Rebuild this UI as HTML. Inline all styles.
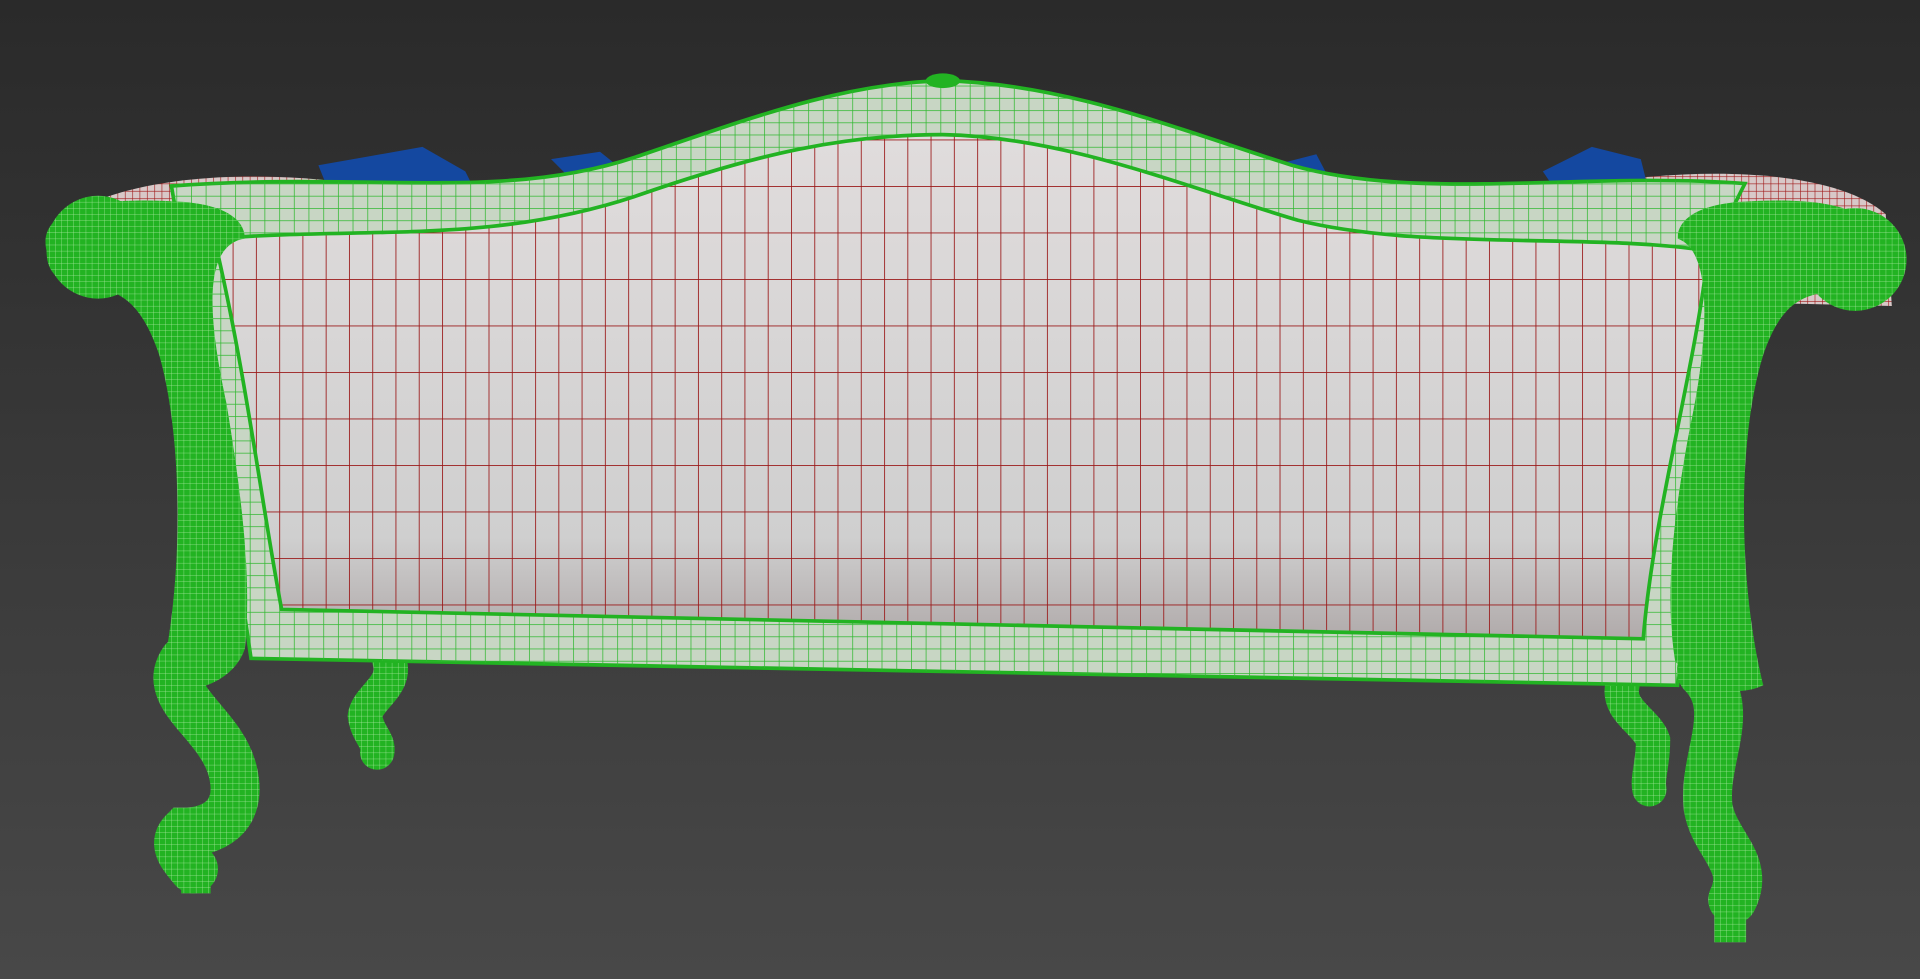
<!DOCTYPE html>
<html><head><meta charset="utf-8"><style>
html,body{margin:0;padding:0;width:1920px;height:979px;overflow:hidden;background:#383838}
svg{display:block}
</style></head><body>
<svg width="1920" height="979" viewBox="0 0 1568 800" preserveAspectRatio="none">
<defs>
<linearGradient id="bg" x1="0" y1="0" x2="0" y2="1">
<stop offset="0" stop-color="#2a2a2a"/><stop offset="1" stop-color="#484848"/></linearGradient>
<linearGradient id="pan" x1="0" y1="0" x2="0" y2="1">
<stop offset="0" stop-color="#e0dcdc"/><stop offset="0.8" stop-color="#cfcfcf"/><stop offset="1" stop-color="#b0aaaa"/></linearGradient>
<pattern id="rg" width="19" height="38" patternUnits="userSpaceOnUse">
<path d="M0,0V38M0,0H19" stroke="#9a1818" stroke-width="1.4" fill="none"/></pattern>
<pattern id="gg" width="12" height="10" patternUnits="userSpaceOnUse">
<path d="M0,0V10M0,0H12" stroke="#2fb82f" stroke-width="1.2" fill="none"/></pattern>
<pattern id="gd" width="5" height="5" patternUnits="userSpaceOnUse">
<rect width="5" height="5" fill="#22b322"/><path d="M0,0V5M0,0H5" stroke="#a8e8a0" stroke-width="0.6" fill="none"/></pattern>
<pattern id="rd" width="6" height="6" patternUnits="userSpaceOnUse">
<rect width="6" height="6" fill="#d8c8c8"/><path d="M0,0V6M0,0H6" stroke="#a01818" stroke-width="1" fill="none"/></pattern>
<clipPath id="pc"><path id="panel" d="M175,195 C300,185 400,200 520,160 C620,125 690,110 770,110 C870,112 960,150 1060,180 C1160,205 1300,190 1395,205 C1385,300 1350,420 1342,522 L230,498 C215,420 200,300 175,195 Z"/></clipPath>
</defs>
<rect width="1568" height="800" fill="url(#bg)"/>
<!-- red arm tops -->
<path d="M45,185 C80,150 180,135 290,150 L230,240 L80,240 Z" fill="url(#rd)"/>
<path d="M1300,150 C1400,135 1500,140 1540,175 L1545,250 L1330,245 Z" fill="url(#rd)"/>
<!-- blue cushions -->
<path d="M260,135 L300,128 L345,120 L380,140 L390,160 L270,160 Z" fill="#1448a0"/>
<path d="M450,130 L490,124 L510,140 L470,150 Z" fill="#1448a0"/>
<path d="M1040,135 L1075,126 L1085,145 Z" fill="#1448a0"/>
<path d="M1260,140 L1300,120 L1340,130 L1345,150 L1270,155 Z" fill="#1448a0"/>
<!-- back legs -->
<path d="M318,540 C325,560 300,570 298,585 C300,600 310,605 308,615" stroke="url(#gd)" stroke-width="28" fill="none" stroke-linecap="round"/>
<path d="M1325,560 C1320,580 1345,590 1350,605 C1350,625 1345,635 1347,645" stroke="url(#gd)" stroke-width="28" fill="none" stroke-linecap="round"/>
<!-- frame -->
<path d="M140,152 C300,140 410,165 520,128 C620,94 690,68 770,66 C870,68 960,105 1055,135 C1160,165 1290,140 1425,150 L1400,200 L1370,560 L205,538 L195,470 Z" fill="#c8d6c4" stroke="#22b322" stroke-width="3"/>
<path d="M140,152 C300,140 410,165 520,128 C620,94 690,68 770,66 C870,68 960,105 1055,135 C1160,165 1290,140 1425,150 L1400,200 L1370,560 L205,538 L195,470 Z" fill="url(#gg)"/>
<!-- panel -->
<use href="#panel" fill="url(#pan)"/>
<g clip-path="url(#pc)"><rect x="150" y="100" width="1270" height="440" fill="url(#rg)"/></g>
<use href="#panel" fill="none" stroke="#22b322" stroke-width="3"/>
<!-- left arm -->
<path d="M38,205 C30,170 80,160 150,165 C185,168 200,180 200,195 C165,200 170,260 185,330 C200,420 205,480 200,530 C190,560 150,570 130,560 C150,480 150,360 130,290 C115,245 95,235 70,235 C45,232 38,220 38,205 Z" fill="url(#gd)"/>
<circle cx="80" cy="202" r="42" fill="url(#gd)"/>
<!-- right arm -->
<path d="M1530,205 C1540,170 1490,160 1420,165 C1385,168 1370,180 1370,195 C1400,205 1395,280 1380,350 C1365,430 1360,490 1368,540 C1385,565 1420,570 1440,560 C1420,480 1418,360 1440,290 C1455,245 1475,240 1500,238 C1525,235 1530,220 1530,205 Z" fill="url(#gd)"/>
<circle cx="1515" cy="212" r="42" fill="url(#gd)"/>
<!-- front legs -->
<path d="M150,540 C130,570 180,590 190,630 C200,670 170,680 150,680 C140,690 150,700 158,710" stroke="url(#gd)" stroke-width="40" fill="none" stroke-linecap="round"/>
<rect x="148" y="700" width="24" height="30" fill="url(#gd)"/>
<path d="M1390,550 C1420,580 1390,620 1395,660 C1400,690 1430,705 1415,735" stroke="url(#gd)" stroke-width="40" fill="none" stroke-linecap="round"/>
<rect x="1400" y="735" width="26" height="35" fill="url(#gd)"/>
<!-- crest -->
<ellipse cx="770" cy="66" rx="14" ry="6" fill="#22b322"/>
</svg>
</body></html>
